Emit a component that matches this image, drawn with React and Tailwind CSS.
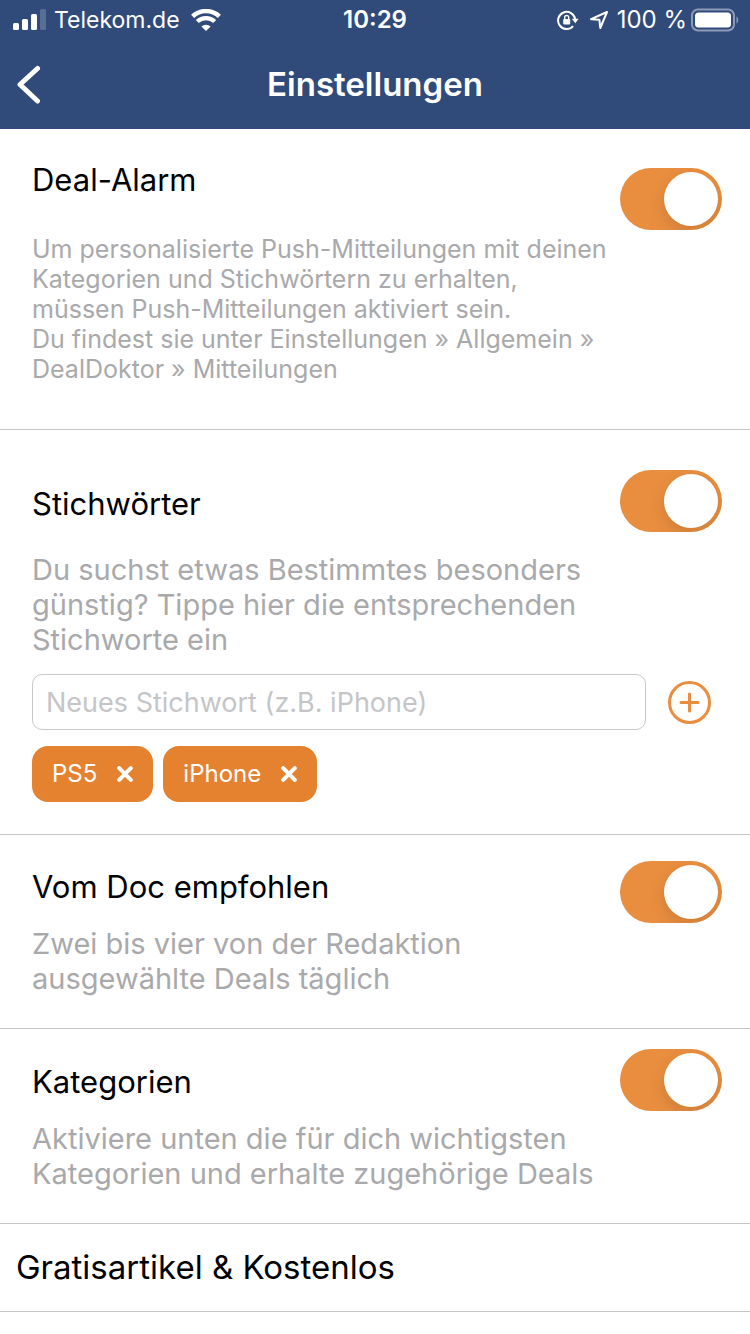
import { useState } from "react";

function Toggle({ id }) {
  return (
    <input
      id={id}
      type="checkbox"
      role="switch"
      defaultChecked
      className="flex h-[62px] w-[102px] shrink-0 cursor-pointer appearance-none items-center overflow-hidden rounded-full bg-gray-200 px-1 before:size-[54px] before:rounded-full before:bg-white before:shadow-[0_6px_16px_rgba(0,0,0,0.12)] before:content-[''] checked:justify-end checked:bg-[#e98e3f]"
    />
  );
}

function StatusBar() {
  return (
    <div className="grid h-10 grid-cols-3 items-center text-[24px] leading-10">
      <div className="flex items-center pl-3 text-[23px]">
        <svg className="mr-2 h-[22px] w-[34px]" viewBox="0 0 34 22" fill="#fff" aria-hidden="true">
          <rect x="1" y="14" width="6" height="7" rx="1.5" />
          <rect x="10" y="10" width="6" height="11" rx="1.5" />
          <rect x="19" y="5" width="6" height="16" rx="1.5" />
          <rect x="28" y="0" width="6" height="21" rx="1.5" opacity="0.2" />
        </svg>
        <span>Telekom.de</span>
        <svg className="ml-[11px] h-[22px] w-[30px]" viewBox="0 0 30 22" fill="none" stroke="#fff" aria-hidden="true">
          <path d="M1.6 7.4a19.3 19.3 0 0 1 26.8 0" strokeWidth="4.4" />
          <path d="M6.3 12.6a12.4 12.4 0 0 1 17.4 0" strokeWidth="4.2" />
          <path d="M15 22 10.4 17.5a6.6 6.6 0 0 1 9.2 0Z" fill="#fff" stroke="none" />
        </svg>
      </div>
      <span className="text-center font-semibold">10:29</span>
      <div className="flex items-center justify-end pr-[11px]">
        <svg className="h-[22px] w-[22px] shrink-0" viewBox="0 0 22 22" fill="none" stroke="#fff" strokeWidth="2" aria-hidden="true">
          <path d="M18.2 10.2A8.6 8.6 0 1 0 16.1 17.2" />
          <path d="M14.8 9.8h6.8l-3.3 4.4Z" fill="#fff" stroke="none" />
          <rect x="6.2" y="10" width="7" height="5.4" rx="0.8" fill="#fff" stroke="none" />
          <path d="M7.7 10.4V8.5a2 2 0 0 1 4 0v1.9" strokeWidth="1.4" />
        </svg>
        <svg className="ml-[10px] h-[20px] w-[20px] shrink-0" viewBox="0 0 20 20" fill="none" stroke="#fff" strokeWidth="2" strokeLinejoin="round" aria-hidden="true">
          <path d="M18 2 2 9.2l8.4.6.9 8.2Z" />
        </svg>
        <span className="ml-2 whitespace-nowrap">100 %</span>
        <svg className="ml-1 h-6 w-12 shrink-0" viewBox="0 0 48 24" fill="none" aria-hidden="true">
          <rect x="1" y="1.5" width="42" height="21" rx="6" stroke="#fff" strokeOpacity="0.45" strokeWidth="2" />
          <rect x="4" y="4.5" width="36" height="15" rx="3.5" fill="#fff" />
          <path d="M45.5 8.5c2.3.7 2.3 6.3 0 7Z" fill="#fff" fillOpacity="0.45" />
        </svg>
      </div>
    </div>
  );
}

function Chip({ children, onRemove }) {
  return (
    <button
      type="button"
      aria-label={`${children} entfernen`}
      onClick={onRemove}
      className="flex h-14 items-center gap-5 rounded-2xl bg-[#e5822f] px-5 text-[24px] text-white"
    >
      {children}
      <svg className="size-4" viewBox="0 0 16 16" stroke="#fff" strokeWidth="4" strokeLinecap="round" aria-hidden="true">
        <path d="m2.2 2.2 11.6 11.6M13.8 2.2 2.2 13.8" />
      </svg>
    </button>
  );
}

const heading = "block text-[31px] leading-10 text-black";
const body = "whitespace-pre-line text-[29px] leading-[35px] text-[#a9a9ab]";

export default function App() {
  const [keywords, setKeywords] = useState(["PS5", "iPhone"]);
  const [draft, setDraft] = useState("");

  function addKeyword(event) {
    event.preventDefault();
    const word = draft.trim();
    if (word && !keywords.includes(word)) setKeywords([...keywords, word]);
    setDraft("");
  }

  return (
    <div className="min-h-screen bg-white font-['Inter','Liberation_Sans',sans-serif]">
      <header className="bg-[#304a7a] text-white">
        <StatusBar />
        <div className="grid h-[89px] grid-cols-[64px_1fr_64px] items-center">
          <button type="button" aria-label="Zurück" className="flex h-full items-center pl-4">
            <svg className="h-10 w-[26px]" viewBox="0 0 26 40" fill="none" stroke="#fff" strokeWidth="5" strokeLinecap="round" strokeLinejoin="round" aria-hidden="true">
              <path d="M21.5 3.5 4 19.500l17.500 16.500" />
            </svg>
          </button>
          <h1 className="text-center text-[33px] font-semibold">Einstellungen</h1>
        </div>
      </header>

      <main>
        <section className="flex items-start justify-between border-b border-[#c7c7c8] pt-[31px] pr-7 pb-[45px] pl-8">
          <div className="min-w-0 flex-1">
            <label htmlFor="deal-alarm" className={heading}>Deal-Alarm</label>
            <p className="mt-[34px] text-[25px] leading-[30px] whitespace-pre-line text-[#a9a9ab]">
              {"Um personalisierte Push-Mitteilungen mit deinen\nKategorien und Stichwörtern zu erhalten,\nmüssen Push-Mitteilungen aktiviert sein.\nDu findest sie unter Einstellungen » Allgemein »\nDealDoktor » Mitteilungen"}
            </p>
          </div>
          <div className="pt-2"><Toggle id="deal-alarm" /></div>
        </section>

        <section className="border-b border-[#c7c7c8] pt-10 pr-7 pb-8 pl-8">
          <div className="flex items-start justify-between">
            <div className="min-w-0 flex-1 pt-[14px]">
              <label htmlFor="keywords" className={heading}>Stichwörter</label>
              <p className={`mt-7 ${body}`}>
                {"Du suchst etwas Bestimmtes besonders\ngünstig? Tippe hier die entsprechenden\nStichworte ein"}
              </p>
            </div>
            <Toggle id="keywords" />
          </div>
          <form onSubmit={addKeyword} className="mt-[17px] flex items-center gap-[22px] pr-[10px]">
            <input
              type="text"
              aria-label="Neues Stichwort"
              placeholder="Neues Stichwort (z.B. iPhone)"
              value={draft}
              onChange={(event) => setDraft(event.target.value)}
              className="h-14 min-w-0 flex-1 rounded-[10px] border border-[#c9c9cb] px-[13px] text-[27px] text-black outline-none placeholder:text-[#c5c5c7]"
            />
            <button type="submit" aria-label="Stichwort hinzufügen">
              <svg className="size-11" viewBox="0 0 44 44" fill="none" stroke="#e98e3f" strokeWidth="3" strokeLinecap="round" aria-hidden="true">
                <circle cx="21.5" cy="22.5" r="20" />
                <path d="M21.5 14v17M13 22.5h17" />
              </svg>
            </button>
          </form>
          <div className="mt-4 flex flex-wrap gap-[10px]">
            {keywords.map((word) => (
              <Chip key={word} onRemove={() => setKeywords(keywords.filter((k) => k !== word))}>{word}</Chip>
            ))}
          </div>
        </section>

        <section className="flex items-start justify-between border-b border-[#c7c7c8] pt-[26px] pr-7 pb-8 pl-8">
          <div className="min-w-0 flex-1 pt-[6px]">
            <label htmlFor="recommended" className={heading}>Vom Doc empfohlen</label>
            <p className={`mt-[19px] ${body}`}>{"Zwei bis vier von der Redaktion\nausgewählte Deals täglich"}</p>
          </div>
          <Toggle id="recommended" />
        </section>

        <section className="flex items-start justify-between border-b border-[#c7c7c8] pt-5 pr-7 pb-8 pl-8">
          <div className="min-w-0 flex-1 pt-[13px]">
            <label htmlFor="categories" className={heading}>Kategorien</label>
            <p className={`mt-[19px] ${body}`}>{"Aktiviere unten die für dich wichtigsten\nKategorien und erhalte zugehörige Deals"}</p>
          </div>
          <Toggle id="categories" />
        </section>

        <a href="#gratisartikel" className="flex h-[88px] items-center border-b border-[#c7c7c8] px-4 text-[33px] text-black">
          Gratisartikel &amp; Kostenlos
        </a>
      </main>
    </div>
  );
}
